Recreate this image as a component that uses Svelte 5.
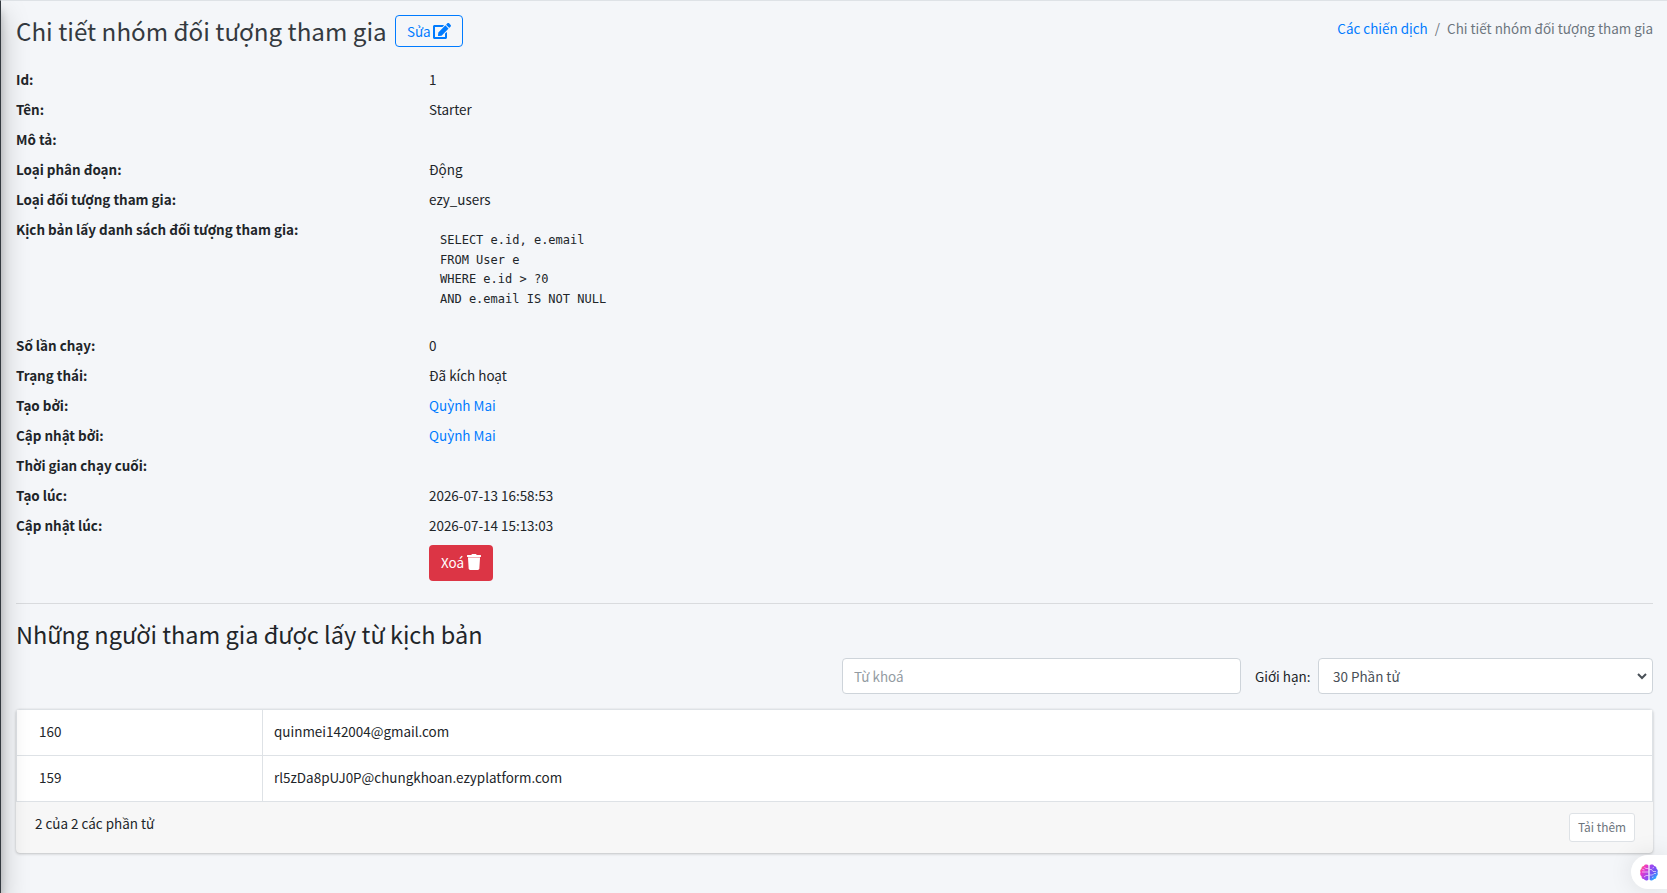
<script lang="ts">
  interface IField {
    label: string;
    value?: string;
    link?: boolean;
    code?: boolean;
  }
  const script = `SELECT e.id, e.email
FROM User e
WHERE e.id > ?0
AND e.email IS NOT NULL`;
  const fields: IField[] = [
    { label: "Id:", value: "1" },
    { label: "Tên:", value: "Starter" },
    { label: "Mô tả:" },
    { label: "Loại phân đoạn:", value: "Động" },
    { label: "Loại đối tượng tham gia:", value: "ezy_users" },
    { label: "Kịch bản lấy danh sách đối tượng tham gia:", value: script, code: true },
    { label: "Số lần chạy:", value: "0" },
    { label: "Trạng thái:", value: "Đã kích hoạt" },
    { label: "Tạo bởi:", value: "Quỳnh Mai", link: true },
    { label: "Cập nhật bởi:", value: "Quỳnh Mai", link: true },
    { label: "Thời gian chạy cuối:" },
    { label: "Tạo lúc:", value: "2026-07-13 16:58:53" },
    { label: "Cập nhật lúc:", value: "2026-07-14 15:13:03" },
  ];
  const participants = [
    { id: 160, email: "quinmei142004@gmail.com" },
    { id: 159, email: "rl5zDa8pUJ0P@chungkhoan.ezyplatform.com" },
  ];
  let keyword = "";
  let limit = 30;
</script>

<div class="page">
  <div class="sidebar-shadow"></div>
  <header>
    <h1>Chi tiết nhóm đối tượng tham gia</h1>
    <button class="edit">
      <span>Sửa</span>
      <svg width="18" height="16" viewBox="0 0 576 512" fill="currentColor">
        <path
          d="M402.6 83.2l90.2 90.2c3.8 3.8 3.8 10 0 13.8L274.4 405.6l-92.8 10.3c-12.4 1.4-22.9-9.1-21.5-21.5l10.3-92.8L388.8 83.2c3.8-3.8 10-3.8 13.8 0zm162-22.9l-48.8-48.8c-15.2-15.2-39.9-15.2-55.2 0l-35.4 35.4c-3.8 3.8-3.8 10 0 13.8l90.2 90.2c3.8 3.8 10 3.8 13.8 0l35.4-35.4c15.2-15.3 15.2-40 0-55.2zM384 346.2V448H64V128h229.8c3.2 0 6.2-1.3 8.5-3.5l40-40c7.6-7.6 2.2-20.5-8.5-20.5H48C21.5 64 0 85.5 0 112v352c0 26.5 21.5 48 48 48h352c26.5 0 48-21.5 48-48V306.2c0-10.7-12.9-16-20.5-8.5l-40 40c-2.2 2.3-3.5 5.3-3.5 8.5z"
        />
      </svg>
    </button>
    <nav>
      <a href="#campaigns">Các chiến dịch</a>
      <span class="slash">/</span>
      <span>Chi tiết nhóm đối tượng tham gia</span>
    </nav>
  </header>

  <dl>
    {#each fields as field}
      <div class="field" class:tall={field.code}>
        <dt>{field.label}</dt>
        <dd>
          {#if field.code}
            <pre>{field.value}</pre>
          {:else if field.link}
            <a href="#admin">{field.value}</a>
          {:else if field.value}
            {field.value}
          {/if}
        </dd>
      </div>
    {/each}
  </dl>
  <button class="delete">
    <span>Xoá</span>
    <svg width="14" height="16" viewBox="0 0 448 512" fill="currentColor">
      <path
        d="M432 32H312l-9.400-18.700A24 24 0 0 0 281.100 0H166.800a23.720 23.720 0 0 0-21.400 13.300L136 32H16A16 16 0 0 0 0 48v32a16 16 0 0 0 16 16h416a16 16 0 0 0 16-16V48a16 16 0 0 0-16-16z"
      />
      <path d="M53.200 467a48 48 0 0 0 47.900 45h245.800a48 48 0 0 0 47.900-45L416 128H32z" />
      <path d="M32 96h384v32H32z" opacity="0.6" />
    </svg>
  </button>

  <hr />
  <h2>Những người tham gia được lấy từ kịch bản</h2>
  <div class="filters">
    <input type="text" placeholder="Từ khoá" bind:value={keyword} />
    <label for="limit">Giới hạn:</label>
    <div class="select">
      <select id="limit" bind:value={limit}>
        <option value={30}>30 Phần tử</option>
      </select>
      <svg width="10" height="7" viewBox="0 0 10 7" fill="none" stroke="currentColor" stroke-width="2">
        <path d="M1 1l4 4 4-4" />
      </svg>
    </div>
  </div>

  <div class="card">
    {#each participants as participant}
      <div class="row">
        <div class="id">{participant.id}</div>
        <div class="email">{participant.email}</div>
      </div>
    {/each}
    <footer>
      <span>2 của 2 các phần tử</span>
      <button class="more">Tải thêm</button>
    </footer>
  </div>

  <div class="assistant">
    <svg width="18" height="17" viewBox="0 0 18 17">
      <defs>
        <linearGradient id="left" x1="0" y1="0" x2="0.7" y2="1">
          <stop offset="0" stop-color="#ff9a3d" />
          <stop offset="0.4" stop-color="#ee36c8" />
          <stop offset="1" stop-color="#8a4df5" />
        </linearGradient>
        <linearGradient id="right" x1="0" y1="0" x2="0.5" y2="1">
          <stop offset="0" stop-color="#b044ef" />
          <stop offset="0.6" stop-color="#6d55f5" />
          <stop offset="1" stop-color="#25b5ff" />
        </linearGradient>
      </defs>
      <path
        fill="url(#left)"
        d="M8.400 1.500v14c-.8 1.500-3.800 1.400-4.300-.4-1.700 0-2.700-1.300-2.500-2.700C.2 11.500-.1 9.700.5 8.400-.1 7 .2 5.400 1.500 4.700 1.300 3.100 2.300 1.900 3.900 1.900 4.500.1 7.600-.1 8.400 1.500z"
      />
      <path
        fill="url(#right)"
        d="M9.600 1.500v14c.8 1.500 3.800 1.400 4.300-.4 1.700 0 2.700-1.300 2.500-2.700 1.400-.9 1.700-2.700 1.100-4 .6-1.400.3-3-1-3.700.2-1.600-.8-2.800-2.400-2.800C13.500.1 10.400-.1 9.600 1.500z"
      />
      <path
        fill="none"
        stroke="#fff"
        stroke-opacity="0.65"
        stroke-width="0.9"
        d="M8.500 4.500H6L4.500 3.500M2 8h6.500M8.500 11.500H6L4 13M2.500 5.500l2 .5M9.500 5.500h2l1.500 2h3M9.500 11h3l1.500-1.500h2M12 13.500l1.500-.5M12.500 4l1.500-.5"
      />
    </svg>
  </div>
</div>

<style>
  :global(body) {
    background: #f4f6f9;
    overflow: hidden;
  }
  .page {
    position: relative;
    box-sizing: border-box;
    height: 893px;
    padding: 0 14px 0 15px;
    border-top: 1px solid #dee2e6;
    border-left: 1px solid #343a40;
    overflow: hidden;
    color: #212529;
    font-family: "Noto Sans CJK SC", "Noto Sans", sans-serif;
    font-size: 13.44px;
    line-height: 24px;
  }
  .sidebar-shadow {
    position: absolute;
    z-index: 2;
    top: 0;
    left: -20px;
    width: 20px;
    height: 100%;
    box-shadow: 0 14px 28px rgba(0, 0, 0, 0.25), 0 10px 10px rgba(0, 0, 0, 0.22);
    pointer-events: none;
  }
  a {
    color: #007bff;
    text-decoration: none;
  }
  button,
  input,
  select {
    box-sizing: border-box;
    margin: 0;
    font: inherit;
  }
  header {
    display: flex;
    height: 63px;
    padding-top: 14px;
    box-sizing: border-box;
  }
  h1,
  h2 {
    margin: 0;
    font-size: 24.2px;
    font-weight: 400;
    line-height: 32px;
    white-space: nowrap;
  }
  h1 {
    color: #343a40;
  }
  h2 {
    font-size: 23.5px;
  }
  .edit {
    display: flex;
    align-items: center;
    justify-content: center;
    gap: 3px;
    width: 68px;
    height: 32px;
    margin-left: 8px;
    padding: 0 0 1px 1px;
    border: 1px solid #007bff;
    border-radius: 4px;
    background: none;
    color: #007bff;
  }
  nav {
    margin-left: auto;
    padding-top: 1px;
    color: #6c757d;
  }
  .slash {
    padding: 0 4px;
  }
  dl {
    margin: 0;
  }
  .field {
    display: flex;
    height: 30px;
    padding-top: 3px;
    box-sizing: border-box;
  }
  .field.tall {
    height: 116px;
  }
  dt {
    width: 413px;
    flex: none;
    font-weight: 700;
  }
  dd {
    margin: 0;
  }
  pre {
    margin: 0;
    padding: 14px 11px;
    font: 12px/19.7px "DejaVu Sans Mono", monospace;
  }
  .delete {
    display: flex;
    align-items: center;
    justify-content: center;
    gap: 3px;
    width: 64px;
    height: 36px;
    margin: 5px 0 0 413px;
    padding: 0 0 3px;
    border: none;
    border-radius: 4px;
    background: #dc3545;
    color: #fff;
  }
  hr {
    height: 1px;
    margin: 22px 0 14px;
    border: none;
    background: #d9dbde;
  }
  .filters {
    display: flex;
    align-items: center;
    justify-content: flex-end;
    height: 36px;
    margin-top: 8px;
  }
  input {
    width: 399px;
    height: 36px;
    padding: 0 11px 1px;
    border: 1px solid #ced4da;
    border-radius: 4px;
    background: #fff;
  }
  input::placeholder {
    color: #939ba2;
  }
  label {
    width: 63px;
    margin-left: 14px;
    padding-bottom: 1px;
  }
  .select {
    position: relative;
    width: 335px;
    height: 36px;
    color: #495057;
  }
  select {
    width: 100%;
    height: 36px;
    padding: 0 14px 1px;
    border: 1px solid #ced4da;
    border-radius: 4px;
    background: #fff;
    color: #495057;
    appearance: none;
  }
  .select svg {
    position: absolute;
    top: 15px;
    right: 6px;
  }
  .card {
    margin-top: 15px;
    border-radius: 4px;
    background: #f7f7f7;
    box-shadow: 0 0 1px rgba(0, 0, 0, 0.125), 0 1px 3px rgba(0, 0, 0, 0.2);
    overflow: hidden;
  }
  .row {
    display: flex;
    height: 46px;
    box-sizing: border-box;
    border: 1px solid #dee2e6;
    border-bottom: none;
    background: #fff;
    line-height: 43px;
  }
  .id {
    width: 246px;
    padding-left: 22px;
    box-sizing: border-box;
    border-right: 1px solid #dee2e6;
  }
  .email {
    padding-left: 11px;
  }
  footer {
    display: flex;
    align-items: flex-start;
    justify-content: space-between;
    height: 52px;
    padding: 11px 18px 0 19px;
    box-sizing: border-box;
    border-top: 1px solid #dee2e6;
  }
  footer span {
    line-height: 20px;
  }
  .more {
    width: 66px;
    height: 29px;
    padding: 0 0 1px;
    border: 1px solid #dee2e6;
    border-radius: 3px;
    background: #fff;
    color: #6c757d;
    font-size: 11.9px;
  }
  .assistant {
    position: absolute;
    right: 0;
    bottom: 4px;
    display: flex;
    align-items: center;
    width: 36px;
    height: 34px;
    padding-left: 9px;
    box-sizing: border-box;
    border-radius: 17px 0 0 17px;
    background: #fff;
    box-shadow: 0 0 24px rgba(0, 0, 0, 0.1);
  }
</style>
